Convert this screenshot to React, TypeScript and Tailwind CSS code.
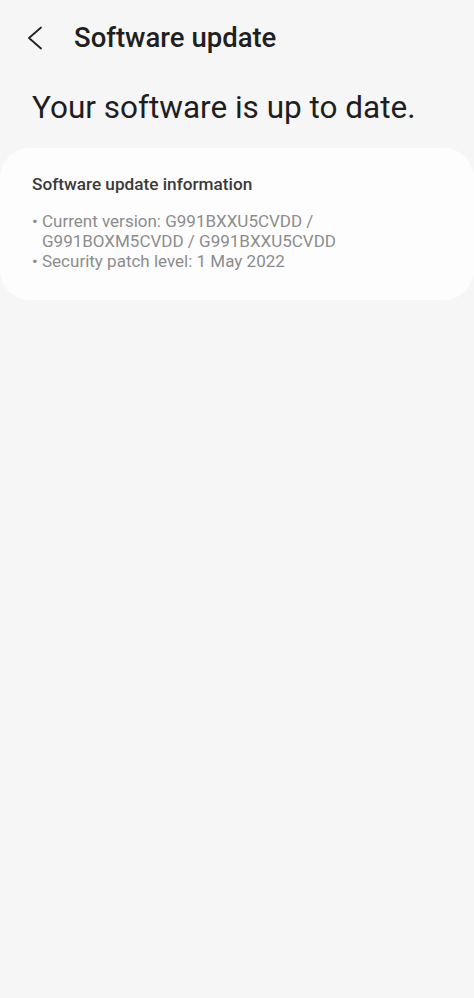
const BackIcon = () => (
  <svg width="18" height="26" viewBox="0 0 18 26" fill="none" className="text-[#222]">
    <path d="M15 2.5 L3 13 L15 23.5" stroke="currentColor" strokeWidth="1.8" strokeLinecap="round" strokeLinejoin="round" />
  </svg>
);

const App = () => {
  return (
    <div
      className="min-h-[998px] w-full bg-[#f6f6f6] text-[#222]"
      style={{ fontFamily: "Roboto, 'Noto Sans', sans-serif" }}
    >
      <div className="flex h-[76px] items-center pl-[26px]">
        <BackIcon />
        <h1 className="ml-[30px] text-[27.5px] font-medium text-[#1f1f1f]">Software update</h1>
      </div>

      <h2 className="mt-[12px] px-[32px] text-[31.5px] leading-[40px] text-[#1e1e1e]">
        Your software is up to date.
      </h2>

      <div className="mt-[20px] rounded-[30px] bg-[#fdfdfd] px-[32px] pt-[24px] pb-[29px]">
        <p className="text-[17.2px] text-[#3a3a3a]" style={{ fontWeight: 500 }}>
          Software update information
        </p>
        <ul className="mt-[13px] text-[17px] leading-[20px] text-[#8c8c8c]">
          <li className="flex">
            <span className="w-[10px]">•</span>
            <span>
              Current version: G991BXXU5CVDD /
              <br />
              G991BOXM5CVDD / G991BXXU5CVDD
            </span>
          </li>
          <li className="flex">
            <span className="w-[10px]">•</span>
            <span>Security patch level: 1 May 2022</span>
          </li>
        </ul>
      </div>
    </div>
  );
};

export default App;
